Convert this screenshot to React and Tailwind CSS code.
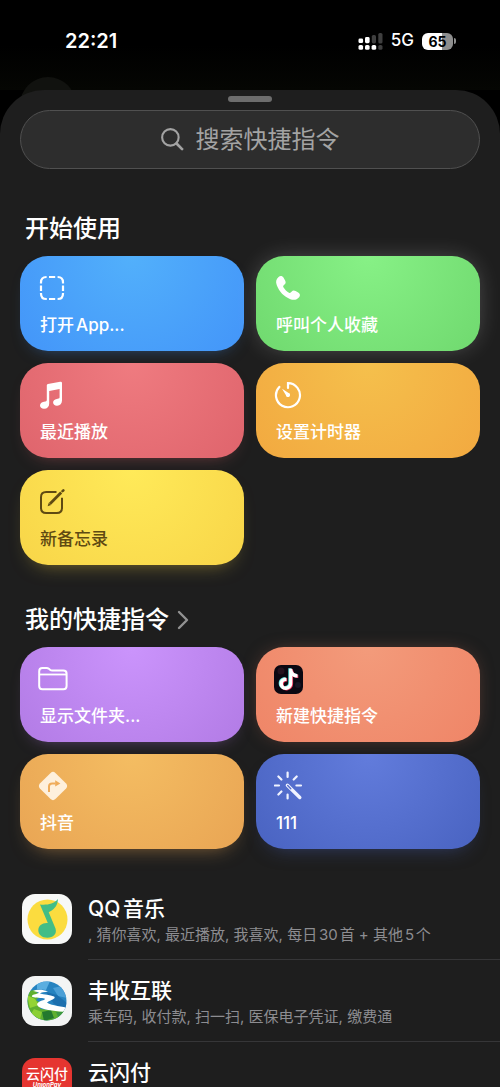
import React, { useState } from "react";

const BatteryIcon = () => (
  <span className="relative flex h-[17px] items-center">
    <span className="flex h-[17px] w-[31px] items-center justify-center rounded-[6px] bg-[linear-gradient(90deg,#ffffff_66%,#8e8e8e_66%)] text-sm font-bold leading-[17px] text-black">
      65
    </span>
    <span className="h-[6px] w-[2px] ml-px rounded-r-full bg-[#8e8e8e]" />
  </span>
);

const SignalIcon = () => (
  <svg width="25" height="17" viewBox="0 0 25 17" fill="none">
    <g fill="#ffffff">
      <rect x="0.5" y="5.5" width="4.6" height="4.6" rx="1.4" />
      <rect x="7" y="4" width="4.6" height="6.2" rx="1.4" />
      <rect x="0.5" y="12" width="4.6" height="4.8" rx="1.6" />
      <rect x="7" y="12" width="4.6" height="4.8" rx="1.6" />
      <rect x="13.6" y="12" width="4.6" height="4.8" rx="1.6" />
    </g>
    <g fill="#3f3f3f">
      <rect x="13.8" y="2" width="4.2" height="8.4" rx="1.6" />
      <rect x="20.3" y="0" width="4.2" height="10.6" rx="1.6" />
      <rect x="20.3" y="12" width="4.2" height="4.8" rx="1.6" />
    </g>
  </svg>
);

const SearchIcon = () => (
  <svg width="23" height="23" viewBox="0 0 24 24" fill="none" stroke="#a3a3a3" strokeWidth="2.2" strokeLinecap="round">
    <circle cx="9.8" cy="9.8" r="8.6" />
    <path d="M16.2 16.2l5.8 5.8" strokeWidth="2.8" />
  </svg>
);

const AppIcon = () => (
  <svg width="28" height="28" viewBox="0 0 28 28" fill="none" stroke="#ffffff" strokeWidth="2.2">
    <path d="M3 9.6V8.4Q3 3 8.4 3H8.6M11 3H17.2M19.6 3H19.8Q25 3 25 8.4V9.6M25 11.6V17M25 19V19.4Q25 25 19.6 25M17.2 25H11M8.8 25H8.4Q3 25 3 19.4V19M3 17V11.6" />
  </svg>
);

const PhoneIcon = () => (
  <svg width="28" height="28" viewBox="0 0 28 28" fill="#ffffff">
    <path d="M4.6 2.9C6.2 1.6 8.5 1.9 9.6 3.7L11.1 6.4C12 8.1 11.8 9.3 10.5 10.5L9.5 11.4C9 11.9 9 12.5 9.4 13.2C10.6 15.3 13 17.6 15 18.8C15.7 19.2 16.2 19.1 16.7 18.6L17.5 17.7C18.6 16.4 20 16.1 21.6 17L24.2 18.5C26.2 19.6 26.5 21.6 25.1 23.3C23 25.8 19.9 26.5 16.4 25.2C9.9 22.7 5.2 17.6 2.8 11.3C1.5 7.7 2 5 4.6 2.9Z" />
  </svg>
);

const MusicIcon = () => (
  <svg width="28" height="28" viewBox="0 0 28 28" fill="#ffffff">
    <path d="M8.8 4.2Q8.8 3.1 9.9 2.9L22.2.8Q24 .5 24 2.1V19.5C24 22.6 22.1 24.5 19.2 24.8C17 25 15.1 23.7 15.1 21.6C15.1 19.6 16.5 18.3 18.8 17.9L20.5 17.6Q21.6 17.4 21.6 16.2V8.1L11.2 9.9V22.4C11.2 25.6 9.2 27.6 6.2 27.8C3.8 27.9 2 26.6 2 24.6C2 22.5 3.5 21.2 5.9 20.8L7.5 20.5Q8.8 20.2 8.8 19Z" />
  </svg>
);

const TimerIcon = () => (
  <svg width="28" height="28" viewBox="0 0 28 28" fill="none" stroke="#ffffff" strokeWidth="2.2" strokeLinecap="round">
    <path d="M14 7V2.2A12 12 0 1 1 5.3 5.9" />
    <path d="M8.2 8.1Q7.7 7.4 8.5 7.9L15.4 12.6A2 2 0 0 1 12.7 15.5Z" fill="#ffffff" stroke="none" />
    <circle cx="14" cy="14" r="2" fill="#ffffff" stroke="none" />
  </svg>
);

const NoteIcon = () => (
  <svg width="28" height="28" viewBox="0 0 28 28" fill="none" stroke="#5f4a12" strokeWidth="2">
    <path d="M18.5 4H8.2Q3 4 3 9.2V19.8Q3 25 8.2 25H18.8Q24 25 24 19.8V9.8" />
    <path d="M23.2 4.5L12 15.7" strokeWidth="2.8" />
    <path d="M10.8 14.7L9.6 18.3L13.1 16.9Z" fill="#5f4a12" stroke="none" />
    <path d="M24.5 3.2L25.4 2.3" strokeWidth="2.6" strokeLinecap="round" />
  </svg>
);

const FolderIcon = () => (
  <svg width="30" height="28" viewBox="0 0 30 28" fill="none" stroke="#ffffff" strokeWidth="2" strokeLinejoin="round">
    <path d="M1.2 21V6.2Q1.2 3 4.4 3H8.6Q9.9 3 10.9 3.8L12 4.7Q13 5.5 14.3 5.5H25.3Q28.6 5.5 28.6 8.7V21Q28.6 24.2 25.4 24.2H4.4Q1.2 24.2 1.2 21Z" />
    <path d="M1.2 9.5H28.6" strokeWidth="1.8" />
  </svg>
);

const notePath =
  "M14.6 3.6H17.6C18 6.9 19.8 8.9 23 9.2V12.4C20.9 12.4 19.2 11.8 17.8 10.8V18C17.8 22.3 14.9 24.8 11.4 24.8C7.7 24.8 5 22 5 18.6C5 14.9 8.1 12.2 11.9 12.7V16C10 15.6 8.4 16.8 8.4 18.6C8.4 20.2 9.6 21.5 11.4 21.5C13.3 21.5 14.6 20.1 14.6 18Z";

const TiktokIcon = () => (
  <svg width="29" height="29" viewBox="0 0 29 29">
    <rect width="29" height="29" rx="7" fill="#0b0812" />
    <circle cx="7" cy="6" r="3.5" fill="#24121e" />
    <circle cx="24" cy="20" r="3" fill="#171524" />
    <path d={notePath} fill="#62e8e4" transform="translate(-.3 -.4)" />
    <path d={notePath} fill="#f0345c" transform="translate(1.3 .6)" />
    <path d={notePath} fill="#ffffff" transform="translate(.5 .1)" />
  </svg>
);

const RouteIcon = () => (
  <svg width="30" height="30" viewBox="0 0 30 30" fill="none">
    <path d="M12.6 1.9Q15 -.2 17.4 1.9L28.1 12.6Q30.2 15 28.1 17.4L17.4 28.1Q15 30.2 12.6 28.1L1.9 17.4Q-.2 15 1.9 12.6Z" fill="#fef0dc" />
    <path d="M11 21V15.6Q11 12.4 14.2 12.4H17.5" stroke="#efac5a" strokeWidth="2" />
    <path d="M17.2 9.2L22.4 12.4L17.2 15.5Z" fill="#efac5a" />
  </svg>
);

const WandIcon = () => (
  <svg width="30" height="30" viewBox="0 0 30 30" fill="none" stroke="#f0f3ff" strokeWidth="2.2" strokeLinecap="round">
    <path d="M13.6 1.5V5.9M13.6 23.5V27.5M.9 14.5H5M22.4 14.5H27M4.4 5.5L7.4 8.5M22.7 5.5L19.7 8.5M4.4 23.5L7.4 20.5" />
    <path d="M13.4 14.3L25.8 26.5" strokeWidth="3.4" />
    <path d="M13.7 14.6L16.8 17.7" stroke="#566dcc" strokeWidth="1.4" />
  </svg>
);

const ChevronIcon = () => (
  <svg width="12" height="20" viewBox="0 0 12 20" fill="none" stroke="#929292" strokeWidth="2.4" strokeLinecap="round" strokeLinejoin="round">
    <path d="M2 2l8 8-8 8" />
  </svg>
);

const QQMusicLogo = () => (
  <svg width="50" height="50" viewBox="0 0 50 50" className="shrink-0">
    <rect width="50" height="50" rx="13" fill="#f7f8f7" />
    <circle cx="25.5" cy="25.5" r="20" fill="#fbdc3f" />
    <path d="M36 5C35.5 13 31.5 15.5 26.7 18.3L33.5 34.5C35.2 39.8 31.4 43.7 25.3 43.7C19.8 43.7 16.3 40.5 16.3 36.2C16.3 31.6 20.5 28.5 25.8 29L18 10.5C24.5 11.1 31.5 10.4 36 5Z" fill="#42bd86" />
  </svg>
);

const HarvestLogo = () => (
  <svg width="50" height="50" viewBox="0 0 50 50" className="shrink-0">
    <defs>
      <clipPath id="globe">
        <circle cx="25" cy="25" r="19.5" />
      </clipPath>
    </defs>
    <rect width="50" height="50" rx="13" fill="#f3f4f4" />
    <g clipPath="url(#globe)">
      <rect width="50" height="50" fill="#2683c0" />
      <path d="M15 5L28 5L24 14L15 13Z" fill="#5aaee0" />
      <path d="M31 12L40 10L45 22L36 20Z" fill="#4b9fd6" />
      <path d="M24 16L35 19L45 27L44 34L32 28Z" fill="#1c6fae" />
      <path d="M4 15L13 14L18 20L14 24L22 29L18 33L44 35V46H4Z" fill="#5fb02f" />
      <path d="M5 19L13 23L17 29L8 32Z" fill="#93d433" />
      <path d="M12 33L20 36L18 43L9 38Z" fill="#8bcf35" />
      <path d="M20 36L29 34L32 42L22 45Z" fill="#23792e" />
      <path d="M34 36L44 35L37 43Z" fill="#3c9840" />
      <path d="M11 15C15 13 21 13.5 26 15.5C22 16 19 16.5 18 17.5C22 18.5 28 19 32 20.5C35 22.5 27 24.5 25 26.5C27 29 37 30 46 32V36C36 35.5 24 34.5 17 31C13 28 16 26 20 24.5C23 23.5 25 22.5 20 22C15 21.5 9 21.5 10 19.8C11 18.3 15 18.2 17 16.8C15 15.5 13 15.6 11 15Z" fill="#ffffff" />
    </g>
  </svg>
);

const UnionPayLogo = () => (
  <svg width="50" height="50" viewBox="0 0 50 50" className="shrink-0">
    <rect width="50" height="50" rx="13" fill="#e53530" />
    <text x="25" y="21" textAnchor="middle" fontSize="14" fontWeight="500" fill="#ffffff">
      云闪付
    </text>
    <text x="25" y="29" textAnchor="middle" fontSize="6" fontWeight="700" fontStyle="italic" fill="#ffffff">
      UnionPay
    </text>
  </svg>
);

const starters = [
  {
    label: "打开App...",
    icon: <AppIcon />,
    style: "text-white bg-[radial-gradient(circle_at_50%_0%,#52b0fb,#4395f9)] shadow-[0_8px_18px_-12px_#4395f999]",
  },
  {
    label: "呼叫个人收藏",
    icon: <PhoneIcon />,
    style: "text-white bg-[radial-gradient(circle_at_50%_0%,#87f186,#70d96f)] shadow-[0_0_24px_-4px_#ffffff44]",
  },
  {
    label: "最近播放",
    icon: <MusicIcon />,
    style: "text-white bg-[radial-gradient(circle_at_50%_0%,#ef7b80,#df646c)] shadow-[0_8px_18px_-12px_#df646c99]",
  },
  {
    label: "设置计时器",
    icon: <TimerIcon />,
    style: "text-white bg-[radial-gradient(circle_at_50%_0%,#f5c04c,#f2a940)]",
  },
  {
    label: "新备忘录",
    icon: <NoteIcon />,
    style: "text-[#5f4a12] bg-[radial-gradient(circle_at_50%_0%,#ffea59,#f8d548)] shadow-[0_10px_20px_-12px_#f8d54888]",
  },
];

const myShortcuts = [
  {
    label: "显示文件夹...",
    icon: <FolderIcon />,
    style: "text-white bg-[radial-gradient(circle_at_50%_0%,#cb94fc,#b27be5)] shadow-[0_8px_18px_-12px_#b27be599]",
  },
  {
    label: "新建快捷指令",
    icon: <TiktokIcon />,
    style: "text-white bg-[radial-gradient(circle_at_50%_0%,#f39b7b,#ef8567)] shadow-[0_0_20px_-8px_#ef856788]",
  },
  {
    label: "抖音",
    icon: <RouteIcon />,
    style: "text-white bg-[radial-gradient(circle_at_50%_0%,#f4bd62,#e9a554)] shadow-[0_10px_20px_-12px_#e9a55499]",
  },
  {
    label: "111",
    icon: <WandIcon />,
    style: "text-white bg-[radial-gradient(circle_at_50%_0%,#627cdc,#4963c1)] shadow-[0_10px_20px_-12px_#4963c188]",
  },
];

const apps = [
  { name: "QQ音乐", logo: <QQMusicLogo />, detail: ", 猜你喜欢, 最近播放, 我喜欢, 每日30首 + 其他5个" },
  { name: "丰收互联", logo: <HarvestLogo />, detail: "乘车码, 收付款, 扫一扫, 医保电子凭证, 缴费通" },
  { name: "云闪付", logo: <UnionPayLogo />, detail: "" },
];

const CardGrid = ({ items }) => (
  <div className="grid grid-cols-2 gap-3 px-5">
    {items.map(({ label, icon, style }) => (
      <button
        key={label}
        className={`flex h-[95px] flex-col items-start justify-between rounded-[28px] pb-3 pl-5 pr-4 pt-4 text-left ${style}`}
      >
        <span className="-ml-0.5 flex h-8 items-center">{icon}</span>
        <span className="text-[17px] font-medium leading-7 whitespace-nowrap">{label}</span>
      </button>
    ))}
  </div>
);

const App = () => {
  const [query, setQuery] = useState("");

  return (
    <div className="flex h-screen flex-col overflow-hidden bg-black text-white [font-family:Inter,'Noto_Sans_CJK_SC',sans-serif] [text-autospace:normal]">
      {/* Status bar */}
      <header className="relative flex h-[90px] shrink-0 items-start justify-between bg-[linear-gradient(180deg,#000000_50%,#050603)] pl-[65px] pr-11 pt-7">
        <span className="absolute left-5 top-[77px] h-14 w-14 rounded-full bg-[#11120f]" />
        <span className="text-xl font-semibold leading-[26px]">22:21</span>
        <div className="flex h-[26px] items-center gap-2">
          <SignalIcon />
          <span className="text-[17px] font-medium">5G</span>
          <BatteryIcon />
        </div>
      </header>

      {/* Sheet */}
      <main className="relative flex-1 rounded-t-[44px] bg-[#1e1e1e] pt-1.5">
        <div className="mx-auto h-1.5 w-11 rounded-full bg-[#6d6d6d]" />

        <label className="mx-5 mt-2 flex h-[59px] items-center justify-center gap-3 rounded-full border border-[#505050] bg-[#2d2d2d]">
          <SearchIcon />
          <input
            type="text"
            aria-label="搜索快捷指令"
            className="w-36 bg-transparent text-2xl leading-8 outline-none placeholder:text-[#a3a3a3]"
            placeholder="搜索快捷指令"
            value={query}
            onChange={(e) => setQuery(e.target.value)}
          />
        </label>

        <h2 className="mb-[11px] mt-11 px-[25px] text-2xl font-medium leading-8">开始使用</h2>
        <CardGrid items={starters} />

        <h2 className="mb-[11px] mt-[39px] flex items-center gap-2 px-[25px] text-2xl font-medium leading-8">
          我的快捷指令
          <ChevronIcon />
        </h2>
        <CardGrid items={myShortcuts} />

        {/* Apps */}
        <ul className="mt-[29px]">
          {apps.map(({ name, logo, detail }) => (
            <li key={name} className="flex h-[82px] items-center gap-4 pl-[22px]">
              {logo}
              <div className="flex h-full min-w-0 flex-1 flex-col border-b border-[#363638] pt-[17px]">
                <h3 className="text-[21px] font-medium leading-7">{name}</h3>
                <p className="text-[15px] leading-6 whitespace-nowrap text-[#8d8d91]">{detail}</p>
              </div>
            </li>
          ))}
        </ul>
      </main>
    </div>
  );
};

export default App;
